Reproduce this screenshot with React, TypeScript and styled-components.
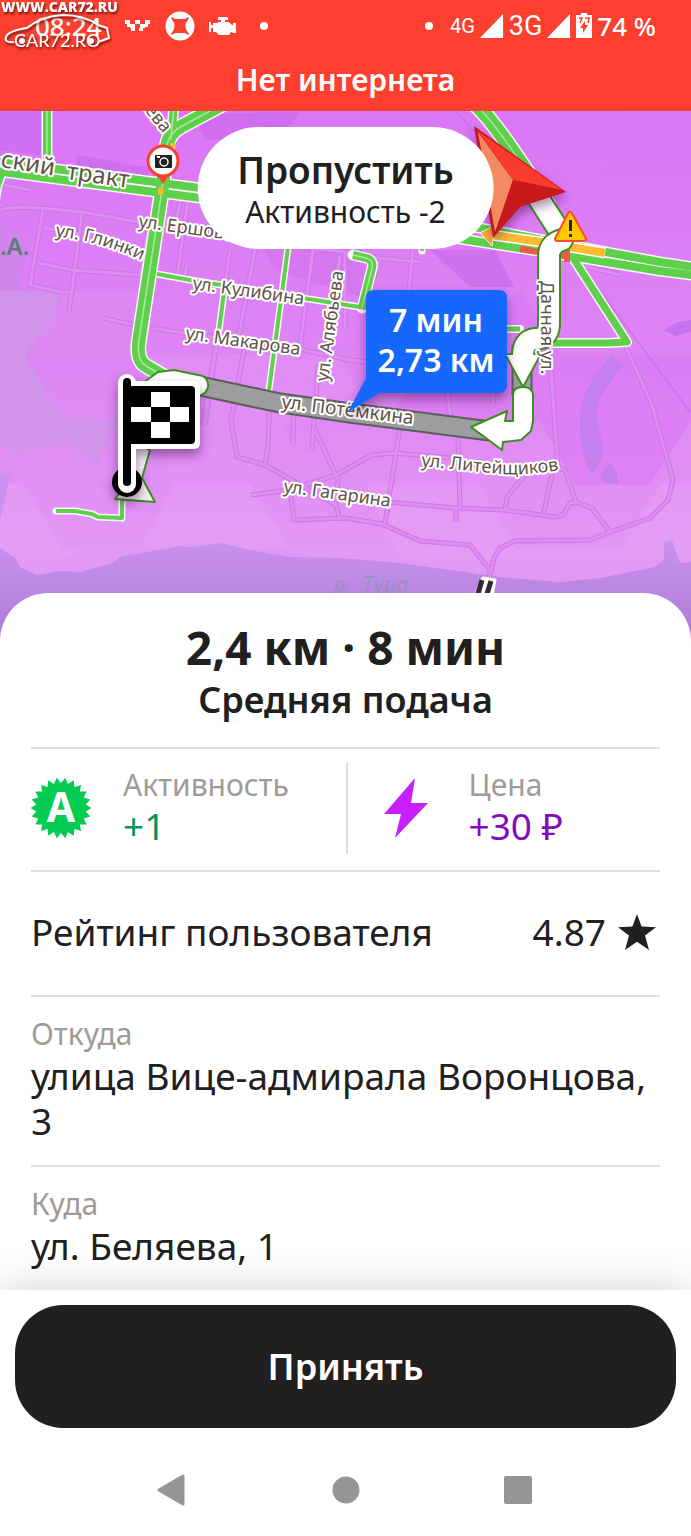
import React from "react";
import styled, { createGlobalStyle } from "styled-components";

const INK = "#21201f";
const GREEN = "#5fd04c";
const EDGE = "#3b8f1b";

const GlobalStyle = createGlobalStyle`
  *, *::before, *::after { box-sizing: border-box; }
  html, body { margin: 0; padding: 0; background: #fff; }
  body { font-family: "Noto Sans", "Open Sans", "Liberation Sans", sans-serif; color: ${INK}; }
  button { font: inherit; color: inherit; border: 0; padding: 0; cursor: pointer; }
  h1, h2, p, dl, dt, dd { margin: 0; font-weight: 400; }
`;

const Page = styled.div`
  min-height: 100vh;
  display: flex;
  flex-direction: column;
  overflow: hidden;
`;

/* ---------- header ---------- */

const Header = styled.header`
  position: relative;
  background: #fc3f2e;
  color: #fff;
  padding-bottom: 1px;
`;

const StatusBar = styled.div`
  display: flex;
  align-items: center;
  justify-content: space-between;
  height: 50px;
  padding: 2px 35px 0;
`;

const StatusGroup = styled.div<{ $gap: number }>`
  display: flex;
  align-items: center;
  gap: ${(p) => p.$gap}px;
`;

const StatusText = styled.span`
  font-size: 26px;
  font-weight: 500;
  line-height: 32px;
`;

const NetworkText = styled.span<{ $size: number }>`
  font-family: Roboto, sans-serif;
  font-size: ${(p) => p.$size}px;
  line-height: 32px;
`;

const Dot = styled.span`
  width: 8px;
  height: 8px;
  margin: 0 12px 0 0;
  border-radius: 50%;
  background: #fff;
`;

const OfflineNotice = styled.p`
  text-align: center;
  font-size: 30px;
  font-weight: 600;
  line-height: 60px;
`;

const Watermark = styled.svg`
  position: absolute;
  left: 0;
  top: 0;
  filter: drop-shadow(1px 2px 1px rgba(60, 0, 0, 0.7));
`;

/* ---------- map ---------- */

const MapArea = styled.section`
  position: relative;
`;

const MapSvg = styled.svg`
  display: block;
  width: 100%;
  height: auto;
`;

const SkipButton = styled.button`
  position: absolute;
  top: 16px;
  left: 50%;
  transform: translateX(-50%);
  padding: 20px 40px 18px;
  border-radius: 62px;
  background: #fff;
  text-align: center;
  white-space: nowrap;
`;

const SkipTitle = styled.span`
  display: block;
  font-size: 37px;
  font-weight: 600;
  line-height: 46px;
`;

const SkipNote = styled.span`
  display: block;
  font-size: 30px;
  line-height: 38px;
`;

const MapLabel = styled.text<{ $size?: number }>`
  font-family: "Noto Sans", sans-serif;
  font-size: ${(p) => p.$size ?? 18}px;
  fill: #5f5347;
  stroke: #fff;
  stroke-width: 4px;
  stroke-linejoin: round;
  paint-order: stroke;
`;

const BubbleText = styled.text`
  font-size: 32px;
  font-weight: 600;
  fill: #fff;
  text-anchor: middle;
`;

/* ---------- order sheet ---------- */

const Sheet = styled.main`
  position: relative;
  flex: 1;
  margin-top: -48px;
  padding: 26px 31px 0;
  border-radius: 48px 48px 0 0;
  background: #fff;
`;

const Summary = styled.div`
  text-align: center;
  padding-bottom: 22px;
`;

const Distance = styled.h1`
  font-size: 46px;
  font-weight: 700;
  line-height: 56px;
`;

const Subtitle = styled.h2`
  font-size: 36px;
  font-weight: 600;
  line-height: 50px;
`;

const Benefits = styled.div`
  display: grid;
  grid-template-columns: 1fr 1fr;
  padding: 14px 0 16px;
  border-top: 2px solid #dfdfdb;
  border-bottom: 2px solid #dfdfdb;
`;

const Benefit = styled.div`
  display: flex;
  align-items: center;
  gap: 32px;
  height: 91px;
  & + & {
    border-left: 2px solid #dfdfdb;
    padding-left: 29px;
  }
`;

const BenefitText = styled.dl`
  padding-bottom: 5px;
`;

const Caption = styled.dt`
  font-size: 30px;
  line-height: 39px;
  color: #9e9b98;
`;

const BenefitValue = styled.dd<{ $color: string }>`
  font-size: 37px;
  line-height: 44px;
  color: ${(p) => p.$color};
`;

const RatingRow = styled.div`
  display: flex;
  align-items: center;
  justify-content: space-between;
  height: 125px;
  padding-bottom: 4px;
  font-size: 37px;
  border-bottom: 2px solid #dfdfdb;
`;

const Score = styled.span`
  display: flex;
  align-items: center;
  gap: 8px;
`;

const Address = styled.dl`
  padding: 17px 0 22px;
  & + & {
    border-top: 2px solid #dfdfdb;
  }
`;

const AddressValue = styled.dd`
  font-size: 37px;
  line-height: 45px;
`;

/* ---------- footer ---------- */

const Footer = styled.footer`
  position: relative;
  padding: 15px 15px 0;
  background: #fff;
  box-shadow: 0 0 40px rgba(0, 0, 0, 0.18);
`;

const AcceptButton = styled.button`
  display: block;
  width: 100%;
  height: 123px;
  border-radius: 48px;
  background: ${INK};
  color: #fff;
  font-size: 36px;
  font-weight: 600;
`;

const NavBar = styled.nav`
  position: relative;
  display: grid;
  grid-template-columns: repeat(3, 1fr);
  padding: 0 12.5%;
  height: 108px;
  background: #fff;
`;

const NavButton = styled.button`
  display: flex;
  align-items: center;
  justify-content: center;
  padding-top: 16px;
  background: none;
`;

/* ---------- drawings ---------- */

const Signal = () => (
  <svg width="24" height="24" viewBox="0 0 25 25" aria-hidden="true">
    <path d="M0 25 L24 0 V25 Z" fill="#fff" />
  </svg>
);

const TaxiIcon = () => (
  <svg width="26" height="14" viewBox="0 0 26 14" aria-hidden="true">
    <path
      fill="#fff"
      d="M0 1h5v4H0zM10 1h5v4h-5zM20 1h5v4h-5zM2 5h3v3H2zM5 5h5v4H5zM15 5h5v4h-5zM20 5h3v3h-3zM6 9h4v3H6zM14 9h4v3h-4z"
    />
  </svg>
);

const WheelIcon = () => (
  <svg width="30" height="30" viewBox="0 0 30 30" aria-hidden="true">
    <circle cx="15" cy="15" r="14.5" fill="#fff" />
    <path
      fill="#fc3f2e"
      d="M7 6L10 8H20L23 6L24 7L22 10Q19 15 22 20L24 23L23 24L20 22H10L7 24L6 23L8 20Q11 15 8 10L6 7Z"
    />
  </svg>
);

const EngineIcon = () => (
  <svg width="28" height="20" viewBox="0 0 28 20" aria-hidden="true">
    <path
      fill="#fff"
      d="M9 1h10v3h-3v2h4l3 3h1V7h3v10h-3l-1-1h-1l-2 3h-10l-3-3H4v-4H2v4H0V6h2v3h2V7h4l2-1h2V4H9z"
    />
  </svg>
);

const BatteryIcon = () => (
  <svg width="16" height="26" viewBox="0 0 16 26" aria-hidden="true">
    <path fill="#fff" d="M5 0h6v2h5v23H0V2h5z" />
    <path d="M3 5h3l-2 5M9 5h4l-1 5" fill="none" stroke="#fc3f2e" strokeWidth="1.5" />
    <path fill="#fc3f2e" d="M9 8L4 15h3v5l5-8H9z" />
  </svg>
);

const SiteMark = () => (
  <Watermark width="130" height="54" viewBox="0 0 130 54" aria-hidden="true">
    <text x="1" y="12" fill="#fff" fontFamily="Open Sans" fontWeight="800" fontSize="14">
      WWW.CAR72.RU
    </text>
    <path
      d="M14 42 Q4 43 6 37 Q8 31 27 28 Q42 16 62 15 Q84 15 98 25 L107 28 L109 38 L98 42"
      fill="none"
      stroke="#fff"
      strokeWidth="2"
    />
    <text x="14" y="47" fill="#fff" fontFamily="Lato" fontWeight="500" fontSize="18">
      CAR72.RO
    </text>
    <circle cx="22" cy="41" r="3" fill="#fff" />
    <circle cx="91" cy="41" r="3" fill="#fff" />
  </Watermark>
);

const badgePoints = Array.from({ length: 44 }, (_, i) => {
  const r = i % 2 ? 25 : 30.5;
  const a = ((i + 1) * Math.PI) / 22;
  return `${(31 + r * Math.sin(a)).toFixed(1)},${(31 - r * Math.cos(a)).toFixed(1)}`;
}).join(" ");

const ActivityBadge = () => (
  <svg width="60" height="62" viewBox="0 1 60 62" aria-hidden="true">
    <g transform="translate(-1 0)">
      <polygon points={badgePoints} fill="#04cc52" />
      <text x="31" y="45" textAnchor="middle" fontSize="41" fontWeight="700" fill="#fff">
        А
      </text>
    </g>
  </svg>
);

const BoltIcon = () => (
  <svg width="60" height="64" viewBox="0 0 60 64" aria-hidden="true">
    <path d="M38 1L7 37H24L18 61L51 26H34Z" fill="#c71fff" />
  </svg>
);

const StarIcon = () => (
  <svg width="46" height="38" viewBox="0 0 46 38" aria-hidden="true">
    <path
      d="M23 1L27.6 13.5L42 14.2L31 22.6L35 37L23 28.8L11 37L15 22.6L4 14.2L18.4 13.5Z"
      fill={INK}
    />
  </svg>
);

const minorRoads = [
  "M0 210Q10 206 40 208L82 212L150 224L230 238L345 252L345 330",
  "M43 210L30 285L60 292L70 292M82 213L69 312M45 228L80 234M38 263L72 270L140 275L148 230M4 185L30 190",
  "M102 318L150 328L212 337L280 345L350 360L420 368",
  "M176 285L188 200M230 250L205 425M255 250L238 340M313 250L298 360M340 255L326 355",
  "M215 350L203 425M245 345L231 420L237 457L265 465L336 505L340 520M270 395L268 445L265 465M294 400L293 443M318 365L312 450M315 430L338 480L336 505",
  "M251 495L290 490L336 475L372 455L394 453L450 458M400 428L385 523M458 435L460 507L456 508L456 522",
  "M290 490L294 520L345 518L382 524L420 541L470 545L486 565L490 570L488 595",
  "M388 502L455 508L505 510L555 517L563 515L570 503L576 502L592 508L610 532",
  "M550 355L558 468L565 470L576 502M553 470L543 516M525 475L507 497L505 510",
  "M625 345L652 405L673 480L668 500L650 518L610 532L590 540L515 541L500 548L494 558L490 575",
  "M348 255L420 262M446 380L452 430M493 395L493 405M380 260L366 300M413 250L405 330",
  "M580 265L620 275M182 195L176 220M187 265L185 275",
];

const greenLanes = [
  { d: "M47 105V162", w: 8, split: true },
  { d: "M174 105L171 140", w: 8, split: true },
  { d: "M150 110L168 136", w: 5 },
  { d: "M0 175L-4 200M4 170L-3 190", w: 5 },
  { d: "M157 274L190 280L302 298L366 308", w: 4 },
  { d: "M289 240L269 390", w: 4 },
  { d: "M225 285L219 330", w: 4 },
  { d: "M353 255L366 258Q374 260 372 268L362 308", w: 8, split: true },
  { d: "M422 235V251", w: 4 },
  { d: "M573 258L627 342L608 343H550", w: 7 },
  { d: "M500 329H520", w: 5 },
  { d: "M56 511H75L92 514L98 517L122 518V496", w: 4 },
  { d: "M476 105Q498 125 548 205", w: 14, split: true },
  { d: "M225 103L182 126Q169 133 167 145L162 190L139 340Q136 360 146 366L170 380", w: 13, split: true },
  { d: "M-5 161L200 188L480 228L606 252L660 262L700 268", w: 8 },
  { d: "M-5 171L200 198L480 242L570 256L660 271L700 276", w: 8 },
];

const ROUTE_DOWN = "M562 240Q549 244 549 256V325Q548 339 535 339Q523 340 523 356";

const CityMap = () => (
  <MapSvg viewBox="0 111 691 530" role="img" aria-label="Карта маршрута">
    <defs>
      <linearGradient id="ground" x1="0" y1="0" x2="0" y2="1">
        <stop offset="0" stopColor="#db76f6" />
        <stop offset="0.5" stopColor="#de86f5" />
        <stop offset="1" stopColor="#e4a0f4" />
      </linearGradient>
      <linearGradient id="river" gradientUnits="userSpaceOnUse" x1="0" y1="540" x2="0" y2="620">
        <stop offset="0" stopColor="#c992f0" />
        <stop offset="1" stopColor="#b47edb" />
      </linearGradient>
      <filter id="soft" x="-30%" y="-30%" width="160%" height="160%">
        <feDropShadow dx="0" dy="6" stdDeviation="6" floodColor="#300040" floodOpacity="0.45" />
      </filter>
      <path id="glinki" d="M55 236L85 241Q113 247 150 264" />
      <path id="liteyshchikov" d="M421 466L500 474Q530 476 570 468" />
    </defs>

    <rect y="111" width="691" height="530" fill="url(#ground)" />
    <path d="M0 111H52L40 155L0 150Z" fill="#cf70f2" />
    <path
      d="M0 225L15 230L28 245L20 290L60 292L55 318L25 355L60 418L115 428L97 464L65 444L18 454L0 446Z"
      fill="#d184ee"
    />
    <path d="M0 290L60 292L55 318L25 355L62 418L120 420L97 464L65 444L18 454L0 446Z" fill="#d293ea" />
    <path d="M60 292H138L145 355H28L58 312Z" fill="#de88f3" />
    <path d="M76 155L150 168L146 180L77 168Z" fill="#cf6ff0" />
    <path d="M195 115L300 111L280 140H205Z" fill="#d36df0" />
    <path d="M255 235L360 238L370 300L275 270Z" fill="#d577ee" />
    <path d="M430 250L495 250L514 287H470Z" fill="#d070ee" />
    <path d="M150 355H340L372 420H290L245 485H170Z" fill="#e293f6" opacity="0.6" />
    <path
      d="M380 420H540L575 485H650L691 420V111H625L590 225H691V355H560L520 290Z"
      fill="#dc78f5"
      opacity="0.6"
    />
    <path
      d="M25 485H0V560H60L82 549H62ZM175 485H250L290 549H140ZM365 485H480L515 549H620L660 485H691V560H400Z"
      fill="#e5a6f4"
      opacity="0.4"
    />
    <path
      d="M612 355Q582 385 580 415Q578 450 592 475L602 460V440L596 412Q600 390 624 366ZM610 463L600 475L604 482L618 484L617 472Z"
      fill="#c57eee"
    />
    <path d="M664 330L678 322L691 320V332L675 336Z" fill="#c472ee" />
    <path
      d="M0 472L10 476L0 520ZM0 548L15 558L20 567L36 575L60 571L80 572L113 563L120 557L180 546L192 547L222 543L245 549L290 557L340 558L400 563L500 577L560 582L600 578L655 567L664 560V542L672 540L680 563L691 562V641H0Z"
      fill="url(#river)"
    />

    <path d="M455 111L510 170L690 412" fill="none" stroke="#c46bee" strokeWidth="2" opacity="0.6" />
    <g fill="none" strokeLinejoin="round">
      {minorRoads.map((d) => (
        <path key={d} d={d} stroke="#cb78e2" strokeWidth="5" />
      ))}
      {minorRoads.map((d) => (
        <path key={d} d={d} stroke="#df8cf4" strokeWidth="3" />
      ))}
    </g>

    <g fill="none" strokeLinejoin="round">
      {greenLanes.map((l) => (
        <path key={l.d} d={l.d} stroke="#fbf6fb" strokeWidth={l.w + 3} strokeLinecap="round" />
      ))}
      {greenLanes.map((l) => (
        <path key={l.d} d={l.d} stroke={GREEN} strokeWidth={l.w} />
      ))}
      {greenLanes
        .filter((l) => l.split)
        .map((l) => (
          <path key={l.d} d={l.d} stroke="#a9e89d" strokeWidth="1.5" />
        ))}
    </g>

    <path d="M492 235L541 242L605 253" fill="none" stroke="#fff" strokeWidth="11" />
    <path d="M492 235L541 242L605 253" fill="none" stroke="#ffba33" strokeWidth="8" />
    <path d="M480 233L495 225L492 246Z" fill="#ffb02e" stroke="#fff" strokeWidth="1" />
    <path d="M520 249L570 257M567 250V262" fill="none" stroke="#ea5a48" strokeWidth="6" />
    <path
      d="M171 143L176 144L175 147L171 146ZM159 188H163V194H158Z"
      fill="#ffb62c"
      stroke="#ffb62c"
      strokeWidth="1"
    />

    <g fill="none">
      <path d="M200 386L280 403L350 413L490 431M522 345V395" stroke="#5d5d5d" strokeWidth="21" />
      <path d="M200 386L280 403L350 413L490 431M522 345V395" stroke="#9d9d9d" strokeWidth="17" />
    </g>

    <g fill="none" strokeLinecap="round" strokeLinejoin="round">
      <path d="M528 182L562 235" stroke={EDGE} strokeWidth="24" />
      <path d="M528 182L562 235" stroke="#fff" strokeWidth="20" />
      <path d={ROUTE_DOWN} stroke={EDGE} strokeWidth="24" />
      <path d="M505 354H541L523 387Z" fill="#fff" stroke={EDGE} strokeWidth="2" />
      <path d={ROUTE_DOWN} stroke="#fff" strokeWidth="20" />
      <path
        d="M513 421V395Q513 387 523 387Q533 387 533 396V421L531 431L521 440L503 442L502 450L471 427L507 411L505 421Z"
        fill="#fff"
        stroke={EDGE}
        strokeWidth="2"
      />
      <path
        d="M140 385L158 372L174 370L203 376Q209 380 208 387Q206 394 199 396L140 410Z"
        fill="#fff"
        stroke={EDGE}
        strokeWidth="2"
      />
      <path
        d="M131 440L150 450L142 478L155 502L115 499L122 490Z"
        fill="#f4f4f4"
        stroke={EDGE}
        strokeWidth="2"
      />
    </g>

    <MapLabel $size={24} transform="translate(0 167) rotate(9)">
      ский
    </MapLabel>
    <MapLabel $size={24} transform="translate(66 179) rotate(8)">
      тракт
    </MapLabel>
    <MapLabel>
      <textPath href="#glinki">ул. Глинки</textPath>
    </MapLabel>
    <MapLabel transform="translate(138 227) rotate(8)">ул. Ершова</MapLabel>
    <MapLabel transform="translate(192 289) rotate(8)">ул. Кулибина</MapLabel>
    <MapLabel transform="translate(185 339) rotate(8)">ул. Макарова</MapLabel>
    <MapLabel transform="translate(328 382) rotate(-82)">ул. Алябьева</MapLabel>
    <MapLabel $size={19} transform="translate(281 408) rotate(7)">
      ул. Потёмкина
    </MapLabel>
    <MapLabel transform="translate(283 492) rotate(8)">ул. Гагарина</MapLabel>
    <MapLabel transform="translate(541 281) rotate(90)">Дачная ул.</MapLabel>
    <MapLabel>
      <textPath href="#liteyshchikov">ул. Литейщиков</textPath>
    </MapLabel>
    <MapLabel transform="translate(137 102) rotate(50)">иева</MapLabel>
    <text x="0" y="255" fontSize="24" fontWeight="600" fill="#587f76">
      .А.
    </text>
    <text x="334" y="591" fontSize="20" fontStyle="italic" fill="#9494c0">
      р.
    </text>
    <text x="362" y="592" fontSize="22" fontStyle="italic" fill="#9494c0">
      Тура
    </text>

    <path
      d="M477 592L483 578L495 580L492 596H476Z"
      fill="#fff"
      stroke="#fff"
      strokeWidth="3"
      strokeLinejoin="round"
    />
    <path d="M482 580L478 594M491 581L487 594" stroke="#34292f" strokeWidth="5" />

    {/* destination flag */}
    <g filter="url(#soft)">
      <circle cx="127" cy="482" r="12" fill="#fff" stroke="#000" strokeWidth="6" />
      <path d="M127 383V484" stroke="#fff" strokeWidth="18" strokeLinecap="round" />
      <rect x="124" y="381" width="76" height="68" rx="6" fill="#fff" />
    </g>
    <path d="M127 382V482" stroke="#000" strokeWidth="8" strokeLinecap="round" />
    <rect x="124" y="386" width="71" height="58" rx="4" fill="#000" />
    <path d="M151 392h19v15h-19zM131 407h20v15h-20zM170 407h19v15h-19zM151 422h19v16h-19z" fill="#fff" />

    {/* speed camera */}
    <path d="M157 175L163 184L169 175Z" fill="#f9402f" />
    <circle cx="163" cy="161" r="15" fill="#fff" stroke="#f9402f" strokeWidth="3" />
    <rect x="155" y="155" width="17" height="13" rx="1" fill="#222" />
    <circle cx="164" cy="162" r="4" fill="none" stroke="#fff" strokeWidth="1.5" />
    <path d="M157 157h3" stroke="#fff" strokeWidth="2" />

    {/* own position */}
    <g filter="url(#soft)" strokeLinejoin="round">
      <path d="M474 126L566 192L520 207L493 238Z" fill="#c4191e" />
    </g>
    <path d="M478 132L513 180L495 232Z" fill="#f58a62" />
    <path d="M478 131L562 190L513 180Z" fill="#fb3c2c" />
    <path d="M513 180L565 192L519 206L495 235Z" fill="#c8191d" />

    {/* road warning */}
    <path
      d="M570 214L584 239H557Z"
      fill="#ffc800"
      stroke="#ff4a32"
      strokeWidth="6"
      strokeLinejoin="round"
    />
    <path
      d="M570 214L584 239H557Z"
      fill="#ffc800"
      stroke="#ffc800"
      strokeWidth="2"
      strokeLinejoin="round"
    />
    <path d="M570.5 220V231M570.5 234V237" stroke="#222" strokeWidth="3" />

    {/* remaining route */}
    <path
      d="M374 290H499Q507 290 507 298V385Q507 393 499 393H380L348 412L366 378V298Q366 290 374 290Z"
      fill="#1768fd"
      filter="url(#soft)"
    />
    <BubbleText x="436" y="332">
      7 мин
    </BubbleText>
    <BubbleText x="436" y="372">
      2,73 км
    </BubbleText>
  </MapSvg>
);

export default function App() {
  return (
    <Page>
      <GlobalStyle />
      <Header>
        <StatusBar>
          <StatusGroup $gap={23}>
            <StatusText>08:24</StatusText>
            <StatusGroup $gap={14}>
              <TaxiIcon />
              <WheelIcon />
              <EngineIcon />
            </StatusGroup>
            <Dot />
          </StatusGroup>
          <StatusGroup $gap={5}>
            <Dot />
            <NetworkText $size={20}>4G</NetworkText>
            <Signal />
            <NetworkText $size={27}>3G</NetworkText>
            <Signal />
            <BatteryIcon />
            <StatusText>74 %</StatusText>
          </StatusGroup>
        </StatusBar>
        <OfflineNotice>Нет интернета</OfflineNotice>
        <SiteMark />
      </Header>

      <MapArea>
        <CityMap />
        <SkipButton type="button">
          <SkipTitle>Пропустить</SkipTitle>
          <SkipNote>Активность -2</SkipNote>
        </SkipButton>
      </MapArea>

      <Sheet>
        <Summary>
          <Distance>2,4 км · 8 мин</Distance>
          <Subtitle>Средняя подача</Subtitle>
        </Summary>
        <Benefits>
          <Benefit>
            <ActivityBadge />
            <BenefitText>
              <Caption>Активность</Caption>
              <BenefitValue $color="#00945e">+1</BenefitValue>
            </BenefitText>
          </Benefit>
          <Benefit>
            <BoltIcon />
            <BenefitText>
              <Caption>Цена</Caption>
              <BenefitValue $color="#820abf">+30 ₽</BenefitValue>
            </BenefitText>
          </Benefit>
        </Benefits>
        <RatingRow>
          <span>Рейтинг пользователя</span>
          <Score>
            4.87
            <StarIcon />
          </Score>
        </RatingRow>
        <Address>
          <Caption>Откуда</Caption>
          <AddressValue>улица Вице-адмирала Воронцова, 3</AddressValue>
        </Address>
        <Address>
          <Caption>Куда</Caption>
          <AddressValue>ул. Беляева, 1</AddressValue>
        </Address>
      </Sheet>

      <Footer>
        <AcceptButton type="button">Принять</AcceptButton>
      </Footer>
      <NavBar>
        <NavButton type="button" aria-label="Назад">
          <svg width="34" height="34" viewBox="0 0 34 34">
            <path
              d="M3 17L27 3V31Z"
              fill="#959595"
              stroke="#959595"
              strokeWidth="3"
              strokeLinejoin="round"
            />
          </svg>
        </NavButton>
        <NavButton type="button" aria-label="Домой">
          <svg width="28" height="28" viewBox="0 0 28 28">
            <circle cx="14" cy="14" r="13.5" fill="#959595" />
          </svg>
        </NavButton>
        <NavButton type="button" aria-label="Недавние">
          <svg width="30" height="30" viewBox="0 0 30 30">
            <rect x="1" y="1" width="28" height="28" rx="2" fill="#959595" />
          </svg>
        </NavButton>
      </NavBar>
    </Page>
  );
}
